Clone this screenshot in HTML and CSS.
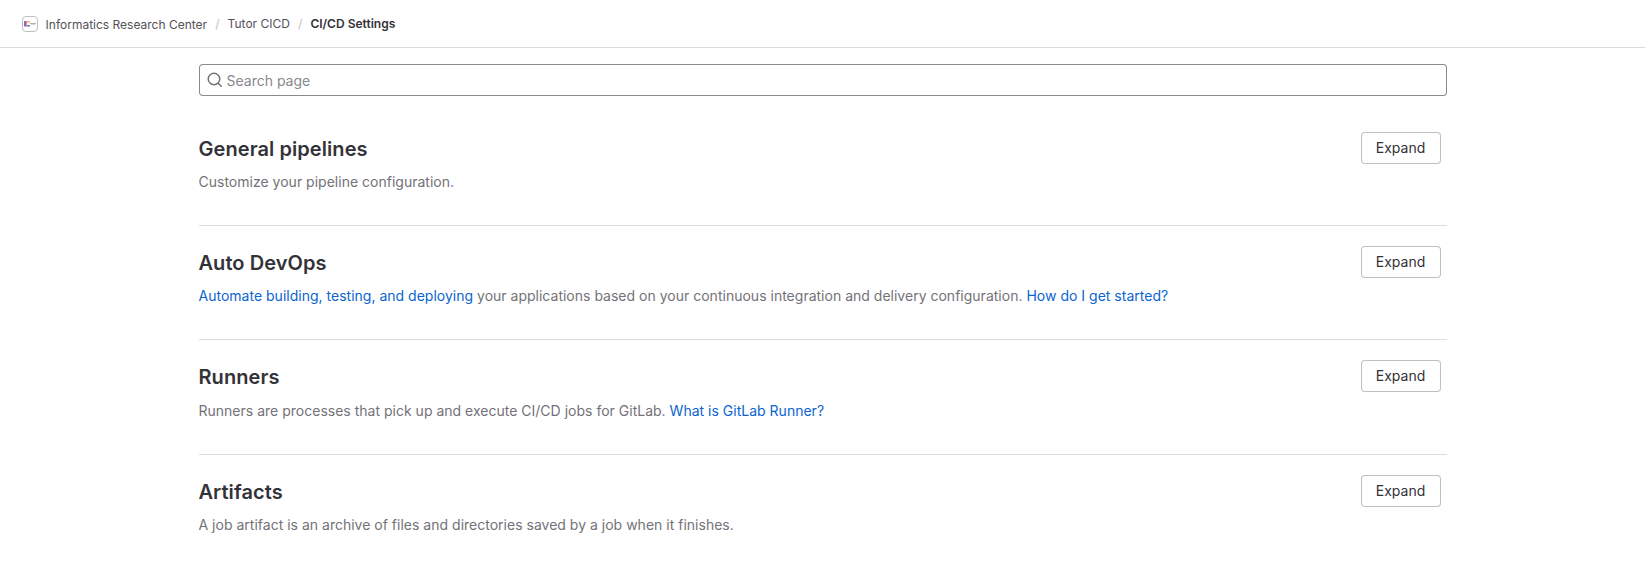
FILE: index.html
```html
<!DOCTYPE html>
<html lang="en">
<head>
<meta charset="utf-8">
<title>CI/CD Settings</title>
<link rel="stylesheet" href="styles.css">
</head>
<body>
<header class="topbar">
  <svg class="avatar" viewBox="0 0 16 16"><rect x=".5" y=".5" width="15" height="15" rx="3.5" fill="#fff" stroke="#bfbfc3"/><path d="M2 5h2v5.500H2z" fill="#8a6cb8"/><path d="M4 5h1v5.500H4z" fill="#e9857c"/><path d="M5 5h3v1.500H5z" fill="#f3b184"/><path d="M5 9h3v1.500H5z" fill="#5d78d8"/><path d="M8 7h6v1H8z" fill="#b5b3b3"/><path d="M9 8h4v1H9z" fill="#d5d3d3"/></svg>
  <nav class="crumbs"><a class="group">Informatics Research Center</a><i>/</i><a>Tutor CICD</a><i>/</i><b>CI/CD Settings</b></nav>
</header>
<main class="content">
  <div class="search">
    <svg class="search-icon" viewBox="0 0 16 16"><circle cx="7" cy="7" r="5.75" fill="none" stroke="currentColor" stroke-width="1.5"/><path d="M11.200 11.200l3 3" stroke="currentColor" stroke-width="1.5" stroke-linecap="round"/></svg>
    <span>Search page</span>
  </div>
  <section class="settings"><div><h2>General pipelines</h2><p>Customize your pipeline configuration.</p></div><button>Expand</button></section>
  <section class="settings"><div><h2>Auto DevOps</h2><p><a>Automate building, testing, and deploying</a> your applications based on your continuous integration and delivery configuration. <a>How do I get started?</a></p></div><button>Expand</button></section>
  <section class="settings"><div><h2>Runners</h2><p>Runners are processes that pick up and execute CI/CD jobs for GitLab. <a>What is GitLab Runner?</a></p></div><button>Expand</button></section>
  <section class="settings"><div><h2>Artifacts</h2><p>A job artifact is an archive of files and directories saved by a job when it finishes.</p></div><button>Expand</button></section>
</main>
</body>
</html>
```
FILE: styles.css
```css
* { box-sizing: border-box; }
body { margin: 0; background: #fff; color: #333238; font: 14px/20px Inter, "Noto Sans", sans-serif; height: 563px; overflow: hidden; }
.topbar { height: 48px; border-bottom: 1px solid #dcdcde; display: flex; align-items: center; padding-left: 22px; }
.avatar { width: 16px; height: 16px; margin-right: 7.6px; }
.crumbs { display: flex; font-size: 12px; line-height: 16px; color: #535158; }
.crumbs .group { padding-top: 1px; margin-bottom: -1px; }
.crumbs i { font-style: normal; color: #bfbfc3; margin: 0 8px 0 8.2px; }
.crumbs b { font-weight: 600; color: #333238; }
.content { width: 1248px; margin: 16px auto 0; }
.search { height: 32px; box-shadow: inset 0 0 0 1px #89888d; border-radius: 4px; display: flex; align-items: center; padding-left: 8.5px; color: #89888d; }
.search span { padding-top: 1px; }
.search-icon { width: 16px; height: 16px; margin-right: 3.5px; color: #737278; }
.settings { display: flex; justify-content: space-between; align-items: flex-start; height: 114.2px; padding: 20px 6px 0 0; border-top: 1px solid #dcdcde; }
.search + .settings { border-top-color: transparent; margin-top: 15px; }
h2 { font-size: 20px; line-height: 24px; font-weight: 630; letter-spacing: .07px; margin: 5px 0 11.2px; }
p { margin: 0; color: #737278; letter-spacing: .008px; }
.settings a { color: #0b64cf; }
button { height: 32px; width: 80px; padding: 0; font: inherit; color: #333238; background: #fff; border: 0; box-shadow: inset 0 0 0 1px #bfbfc3; border-radius: 4px; }
```
